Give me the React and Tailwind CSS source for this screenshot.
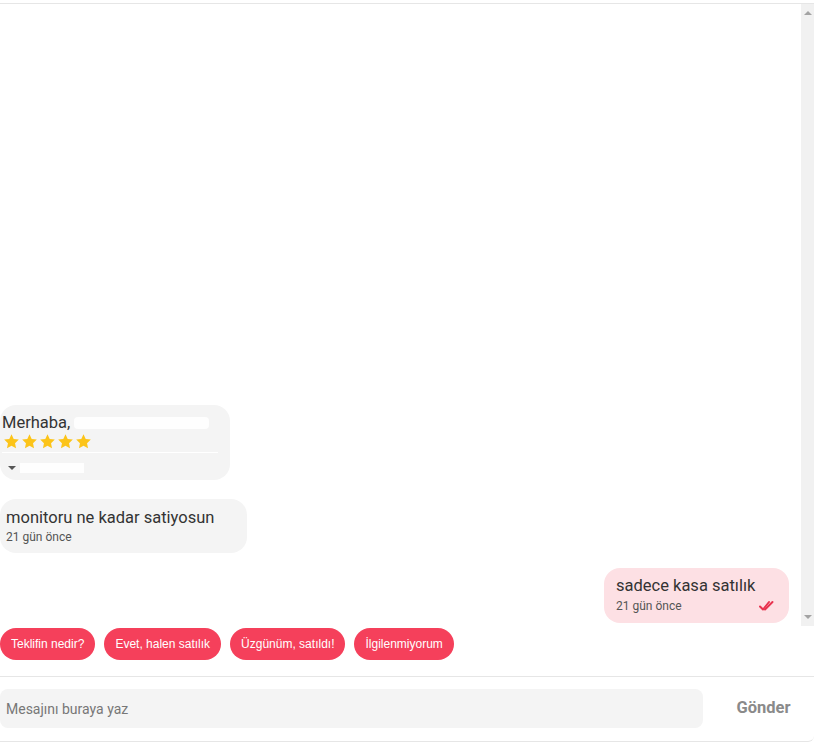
import { useState } from "react";

const replies = ["Teklifin nedir?", "Evet, halen satılık", "Üzgünüm, satıldı!", "İlgilenmiyorum"];

function Star() {
  return (
    <svg width="17" height="17" viewBox="0 0 24 24" className="shrink-0">
      <path
        d="M12 1.8l3.1 6.6 7.2.9-5.3 5 1.4 7.1L12 17.9l-6.4 3.5L7 14.3l-5.3-5 7.2-.9z"
        fill="#fcc419"
      />
    </svg>
  );
}

function DoubleCheck() {
  return (
    <svg width="16" height="12" viewBox="0 0 16 12" fill="none">
      <path d="M1 6.5l3 3L10 2" stroke="#e8334f" strokeWidth="2" strokeLinecap="round" strokeLinejoin="round" />
      <path d="M6 9.5L13.5 2" stroke="#e8334f" strokeWidth="2" strokeLinecap="round" />
    </svg>
  );
}

export default function App() {
  const [text, setText] = useState("");

  return (
    <div className="h-[742px] w-[814px] overflow-hidden bg-white pt-[3px] font-['Roboto',sans-serif] text-[#333]">
      <div className="flex h-[739px] flex-col rounded-br-md border-t border-b border-[#e6e6e6]">
        <div className="flex h-[622px]">
          <div className="flex flex-1 flex-col justify-end pb-[3px] pr-[12px]">
            <div className="w-[230px] rounded-2xl bg-[#f4f4f4] px-[2px] pt-[8px] pb-[7px]">
              <div className="flex items-center text-[16.5px] leading-5 text-[#333]">
                Merhaba,
                <span className="ml-1 h-[12px] w-[135px] rounded-sm bg-white/90" />
              </div>
              <div className="mr-[10px] flex gap-[1px] border-b border-white pb-[2px] pl-[1px]">
                <Star />
                <Star />
                <Star />
                <Star />
                <Star />
              </div>
              <div className="mt-[10px] flex h-[10px] items-center gap-1 pl-[6px]">
                <span className="h-0 w-0 border-x-[4px] border-t-[4px] border-x-transparent border-t-[#555]" />
                <span className="h-[10px] w-[64px] bg-white/90" />
              </div>
            </div>

            <div className="mt-[19px] w-[247px] rounded-2xl bg-[#f4f4f4] px-[6px] pt-[9px] pb-[8px]">
              <div className="text-[16.5px] leading-5">monitoru ne kadar satiyosun</div>
              <div className="mt-[1px] text-[12px] leading-4 text-[#555]">21 gün önce</div>
            </div>

            <div className="mt-[15px] flex justify-end">
              <div className="w-[185px] rounded-2xl bg-[#fde0e4] pl-[12px] pr-[14px] pt-[8px] pb-[9px]">
                <div className="text-[16.5px] leading-5">sadece kasa satılık</div>
                <div className="mt-[2px] flex items-center justify-between text-[12px] leading-4 text-[#555]">
                  <span>21 gün önce</span>
                  <DoubleCheck />
                </div>
              </div>
            </div>
          </div>

          <div className="flex w-[13px] flex-col items-center justify-between bg-[#f1f1f1] py-[7px]">
            <span className="h-0 w-0 border-x-[4px] border-b-[4px] border-x-transparent border-b-[#a3a3a3]" />
            <span className="h-0 w-0 border-x-[4px] border-t-[4px] border-x-transparent border-t-[#a3a3a3]" />
          </div>
        </div>

        <div className="mt-[2px] flex gap-[9px] pb-[16px]">
          {replies.map((r) => (
            <button
              key={r}
              className="h-[32px] rounded-full bg-[#f5405b] px-[11px] font-['Liberation_Sans',Arial,sans-serif] text-[12px] text-white"
            >
              {r}
            </button>
          ))}
        </div>

        <div className="flex items-start border-t border-[#e6e6e6] pt-[12px]">
          <input
            value={text}
            onChange={(e) => setText(e.target.value)}
            placeholder="Mesajını buraya yaz"
            className="h-[39px] w-[703px] rounded-lg bg-[#f4f4f4] px-[6px] text-[14px] text-[#333] outline-none placeholder:text-[#777]"
          />
          <button className="flex h-[39px] flex-1 items-center justify-center pl-[10px] text-[16.5px] font-bold text-[#8a8a8a]">
            Gönder
          </button>
        </div>
      </div>
    </div>
  );
}
